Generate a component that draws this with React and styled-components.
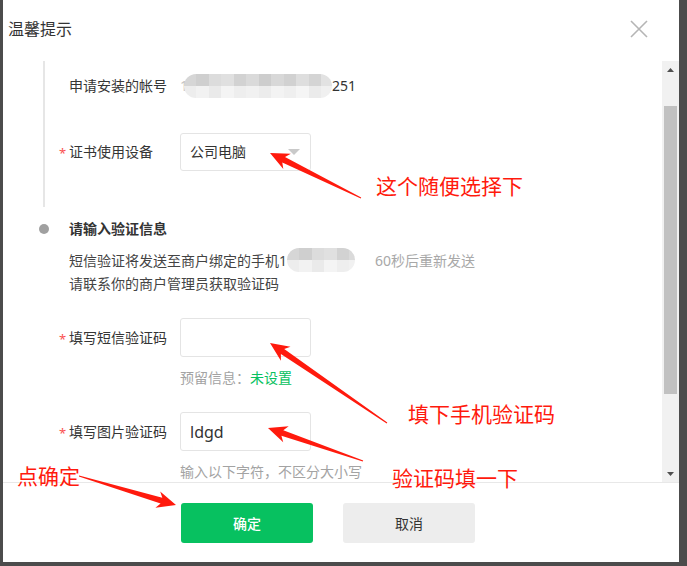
import React from 'react';
import styled, { createGlobalStyle } from 'styled-components';

const GlobalStyle = createGlobalStyle`
  html, body {
    margin: 0;
    padding: 0;
    background: #4c4c4c;
  }
  body {
    font-family: "Noto Sans", "Noto Sans CJK SC", sans-serif;
    color: #333;
  }
  * {
    box-sizing: border-box;
  }
`;

const mosaicTop = ['#d6d6d6', '#cfcfcf', '#dcdcdc', '#e0e0e0', '#d2d2d2', '#dadada', '#cdcdcd', '#d8d8d8', '#d1d1d1', '#dedede', '#d4d4d4', '#e2e2e2'];
const mosaicBottom = ['#ededed', '#f2f2f2', '#eaeaea', '#f4f4f4', '#eeeeee', '#f1f1f1', '#ececec', '#f3f3f3', '#efefef', '#f5f5f5', '#ebebeb', '#f0f0f0'];

const stripes = (colors, size) =>
  colors.map((c, i) => `${c} ${i * size}px ${(i + 1) * size}px`).join(', ');

const arrowPoints = ([x1, y1], [x2, y2]) => {
  const dx = x2 - x1;
  const dy = y2 - y1;
  const len = Math.hypot(dx, dy);
  const ux = dx / len;
  const uy = dy / len;
  const nx = -uy;
  const ny = ux;
  const H = 19;
  const W = 8.5;
  const w = 3;
  const p = (along, side) => `${(x2 - ux * along + nx * side).toFixed(1)},${(y2 - uy * along + ny * side).toFixed(1)}`;
  return [
    p(len, 0.5),
    p(H * 0.8, w),
    p(H, W),
    p(0, 0),
    p(H, -W),
    p(H * 0.8, -w),
    p(len, -0.5),
  ].join(' ');
};

const arrows = [
  { from: [361, 198], to: [270, 153] },
  { from: [387, 423], to: [270, 343] },
  { from: [363, 461], to: [268, 428] },
  { from: [79, 476], to: [176, 505] },
];

const notes = [
  { text: '这个随便选择下', x: 376, y: 172 },
  { text: '填下手机验证码', x: 408, y: 400 },
  { text: '验证码填一下', x: 392, y: 464 },
  { text: '点确定', x: 17, y: 462 },
];

const App = () => {
  return (
    <Page>
      <GlobalStyle />
      <Dialog>
        <Header>
          <Title>温馨提示</Title>
          <CloseIcon width="18" height="18" viewBox="0 0 18 18">
            <path d="M1 1 L17 17 M17 1 L1 17" stroke="#b5b5b5" strokeWidth="1.6" fill="none" />
          </CloseIcon>
        </Header>

        <Body>
          <Content>
            <StepOne>
              <Rail>
                <RailLine />
              </Rail>
              <StepColumn $gap={28} $pad="6px 0 36px">
                <Field $h={38}>
                  <Label>申请安装的帐号</Label>
                  <Value>
                    <Faint>1</Faint>
                    <Mosaic $width={148} $shift={-4} />
                    <span>251</span>
                  </Value>
                </Field>
                <Field $h={38}>
                  <Label $required>证书使用设备</Label>
                  <Select>
                    <span>公司电脑</span>
                    <Caret width="12" height="6" viewBox="0 0 12 6">
                      <polygon points="0,0 12,0 6,6" fill="#c9c9c9" />
                    </Caret>
                  </Select>
                </Field>
              </StepColumn>
            </StepOne>

            <StepTwo>
              <Rail>
                <Dot />
              </Rail>
              <StepColumn>
                <StepTitle>请输入验证信息</StepTitle>
                <Desc>
                  <DescLine>
                    短信验证将发送至商户绑定的手机1
                    <Mosaic $width={68} />
                    <Resend>60秒后重新发送</Resend>
                  </DescLine>
                  <DescLine>请联系你的商户管理员获取验证码</DescLine>
                </Desc>
                <Field $mt={23} $h={39}>
                  <Label $required>填写短信验证码</Label>
                  <Input />
                </Field>
                <Hint>
                  预留信息：<Green>未设置</Green>
                </Hint>
                <Field $mt={24} $h={39}>
                  <Label $required>填写图片验证码</Label>
                  <Input>ldgd</Input>
                </Field>
                <Hint>输入以下字符，不区分大小写</Hint>
              </StepColumn>
            </StepTwo>
          </Content>

          <Scrollbar>
            <ScrollButton>
              <svg width="7" height="4" viewBox="0 0 7 4">
                <polygon points="0,4 7,4 3.5,0" fill="#505050" />
              </svg>
            </ScrollButton>
            <Track>
              <Thumb />
            </Track>
            <ScrollButton>
              <svg width="7" height="4" viewBox="0 0 7 4">
                <polygon points="0,0 7,0 3.5,4" fill="#505050" />
              </svg>
            </ScrollButton>
          </Scrollbar>
        </Body>

        <Footer>
          <Button $primary>确定</Button>
          <Button>取消</Button>
        </Footer>
      </Dialog>

      <Markup width="687" height="566" viewBox="0 0 687 566">
        {arrows.map((a, i) => (
          <polygon key={i} points={arrowPoints(a.from, a.to)} fill="#ff1a0d" />
        ))}
      </Markup>
      {notes.map((n) => (
        <Note key={n.text} $x={n.x} $y={n.y}>
          {n.text}
        </Note>
      ))}
    </Page>
  );
};

const Page = styled.div`
  position: relative;
  width: 687px;
  height: 566px;
  overflow: hidden;
  padding-left: 3px;
`;

const Dialog = styled.div`
  width: 676px;
  height: 562px;
  background: #fff;
  display: flex;
  flex-direction: column;
`;

const Header = styled.div`
  height: 61px;
  flex: none;
  display: flex;
  align-items: center;
  justify-content: space-between;
  padding: 0 31px 4px 5px;
`;

const Title = styled.h2`
  margin: 0;
  font-size: 16px;
  font-weight: 400;
  line-height: 22px;
  color: #333;
`;

const CloseIcon = styled.svg`
  display: block;
`;

const Body = styled.div`
  height: 421px;
  flex: none;
  display: flex;
`;

const Content = styled.div`
  flex: 1;
  overflow: hidden;
  padding-left: 36px;
  font-size: 14px;
  line-height: 20px;
  color: #333;
`;

const StepOne = styled.div`
  display: flex;
  gap: 10px;
`;

const StepTwo = styled.div`
  display: flex;
  gap: 10px;
  margin-top: 12px;
`;

const Rail = styled.div`
  width: 10px;
  flex: none;
  display: flex;
  flex-direction: column;
  align-items: center;
`;

const RailLine = styled.div`
  width: 2px;
  flex: 1;
  background: #e6e6e6;
`;

const Dot = styled.div`
  width: 10px;
  height: 10px;
  margin-top: 5px;
  border-radius: 50%;
  background: #a0a0a0;
`;

const StepColumn = styled.div`
  display: flex;
  flex-direction: column;
  gap: ${({ $gap }) => $gap || 0}px;
  padding: ${({ $pad }) => $pad || 0};
`;

const Field = styled.div`
  display: flex;
  align-items: center;
  height: ${({ $h }) => $h}px;
  margin-top: ${({ $mt }) => $mt || 0}px;
`;

const Label = styled.div`
  width: 121px;
  flex: none;
  padding-left: 10px;
  position: relative;
  color: #353535;

  &::before {
    content: ${({ $required }) => ($required ? '"*"' : '""')};
    position: absolute;
    left: 0;
    top: 1px;
    color: #fa5151;
    font-size: 13px;
  }
`;

const Value = styled.div`
  display: flex;
  align-items: center;
  color: #333;
`;

const Faint = styled.span`
  color: #c4c4c4;
`;

const Mosaic = styled.span`
  display: inline-block;
  vertical-align: middle;
  width: ${({ $width }) => $width}px;
  margin-left: ${({ $shift }) => $shift || 0}px;
  height: 24px;
  border-radius: 12px;
  filter: blur(0.6px);
  background:
    linear-gradient(to right, ${stripes(mosaicTop, 12.5)}) top / 100% 50% no-repeat,
    linear-gradient(to right, ${stripes(mosaicBottom, 12.5)}) bottom / 100% 50% no-repeat;
`;

const Select = styled.div`
  width: 131px;
  height: 38px;
  border: 1px solid #e4e4e4;
  border-radius: 3px;
  display: flex;
  align-items: center;
  justify-content: space-between;
  padding: 0 10px 0 9px;
  font-size: 14px;
  color: #333;
`;

const Caret = styled.svg`
  display: block;
`;

const Input = styled.div`
  width: 131px;
  height: 39px;
  border: 1px solid #e4e4e4;
  border-radius: 3px;
  display: flex;
  align-items: center;
  padding: 0 9px;
  font-size: 16px;
  color: #333;
`;

const StepTitle = styled.div`
  padding-left: 10px;
  font-weight: 700;
  color: #333;
`;

const Desc = styled.div`
  margin-top: 9px;
  padding-left: 10px;
  line-height: 23px;
  color: #444;
`;

const DescLine = styled.div`
  display: flex;
  align-items: center;
  white-space: nowrap;
`;

const Resend = styled.span`
  margin-left: 20px;
  color: #a8a8a8;
`;

const Hint = styled.div`
  margin-top: 11px;
  padding-left: 121px;
  color: #a3a3a3;
  white-space: nowrap;
`;

const Green = styled.span`
  color: #07c160;
`;

const Scrollbar = styled.div`
  width: 17px;
  flex: none;
  background: #f1f1f1;
  display: flex;
  flex-direction: column;
`;

const ScrollButton = styled.div`
  height: 17px;
  flex: none;
  display: flex;
  align-items: center;
  justify-content: center;
`;

const Track = styled.div`
  flex: 1;
  padding: 28px 2px 0;
`;

const Thumb = styled.div`
  height: 288px;
  background: #c1c1c1;
`;

const Footer = styled.div`
  flex: 1;
  border-top: 1px solid #e8e8e8;
  display: flex;
  align-items: flex-start;
  gap: 30px;
  padding: 20px 0 0 178px;
`;

const Button = styled.button`
  width: 132px;
  height: 40px;
  border: none;
  border-radius: 3px;
  font-family: "Noto Sans CJK SC", sans-serif;
  font-size: 14px;
  font-weight: ${({ $primary }) => ($primary ? 500 : 400)};
  background: ${({ $primary }) => ($primary ? '#07c160' : '#ededed')};
  color: ${({ $primary }) => ($primary ? '#fff' : '#333')};
`;

const Markup = styled.svg`
  position: absolute;
  left: 0;
  top: 0;
  pointer-events: none;
`;

const Note = styled.div`
  position: absolute;
  left: ${({ $x }) => $x}px;
  top: ${({ $y }) => $y}px;
  font-family: "Noto Sans CJK SC", sans-serif;
  font-size: 21px;
  line-height: 26px;
  color: #ff1a0d;
  white-space: nowrap;
  pointer-events: none;
`;

export default App;
